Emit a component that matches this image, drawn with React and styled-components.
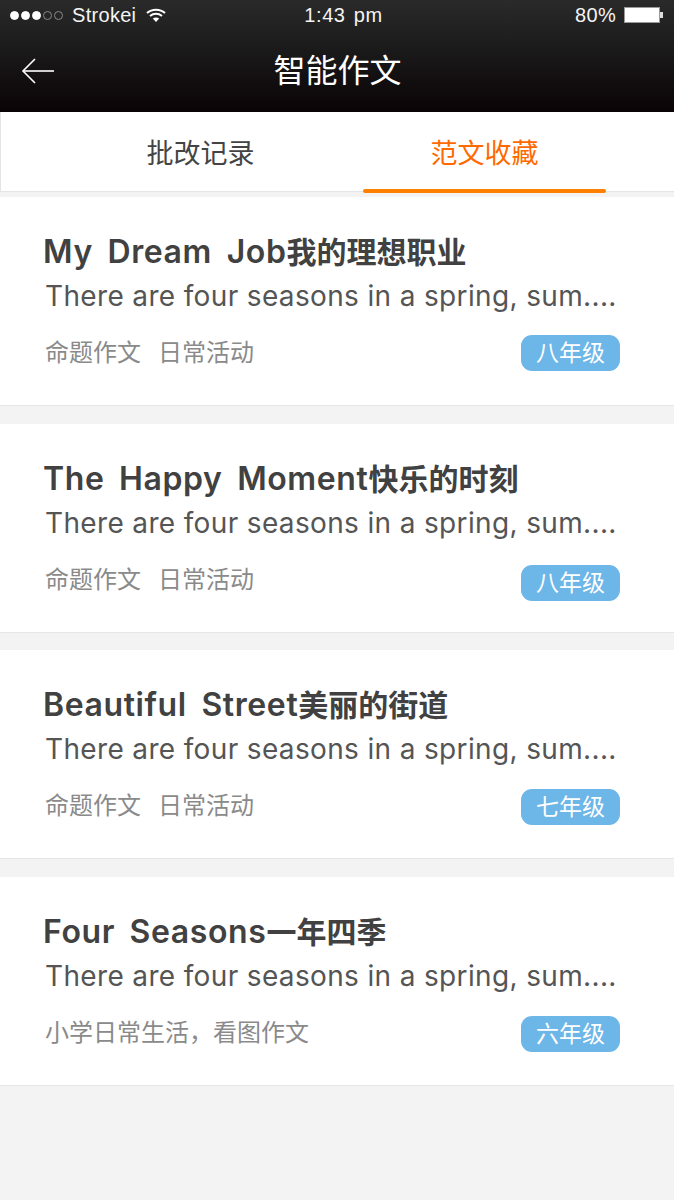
import React from 'react';
import styled, { createGlobalStyle } from 'styled-components';

const FONT = '"Liberation Sans", "Noto Sans CJK SC", sans-serif';
const LATIN = 'Inter, "Noto Sans CJK SC", sans-serif';

const GlobalStyle = createGlobalStyle`
  html, body {
    margin: 0;
    padding: 0;
    background: #f3f3f3;
    font-family: ${FONT};
  }
`;

const Page = styled.div`
  width: 674px;
  height: 1200px;
  overflow: hidden;
  background: #f3f3f3;
`;

const Header = styled.header`
  height: 112px;
  box-sizing: border-box;
  background: linear-gradient(#2a2a2a, #1c1c1c 40%, #0a0306);
  color: #fff;
`;

const StatusBar = styled.div`
  height: 30px;
  display: grid;
  grid-template-columns: 1fr auto 1fr;
  align-items: center;
  padding: 0 10px;
  font-size: 20px;
  color: #f4f4f4;
`;

const StatusLeft = styled.div`
  display: flex;
  align-items: center;
`;

const Signal = styled.span`
  width: 9px;
  height: 9px;
  margin-right: 2px;
  box-sizing: border-box;
  border-radius: 50%;
  border: 1px solid ${(p) => (p.$on ? '#fff' : '#888')};
  background: ${(p) => (p.$on ? '#fff' : 'transparent')};
`;

const Carrier = styled.span`
  margin: 0 10px 0 7px;
  letter-spacing: 0.3px;
`;

const Clock = styled.div`
  margin-left: 13px;
  letter-spacing: 0.6px;
  word-spacing: 2px;
`;

const StatusRight = styled.div`
  display: flex;
  align-items: center;
  justify-content: flex-end;
  gap: 8px;
  letter-spacing: 0.3px;
`;

const NavBar = styled.div`
  height: 82px;
  box-sizing: border-box;
  display: grid;
  grid-template-columns: 1fr auto 1fr;
  align-items: center;
  padding: 0 21px;
`;

const Title = styled.div`
  font-size: 32px;
  line-height: 40px;
  margin-left: 1px;
`;

const Tabs = styled.div`
  height: 80px;
  box-sizing: border-box;
  display: grid;
  grid-template-columns: 243px 243px;
  column-gap: 41px;
  padding-left: 78px;
  background: #fff;
  border-left: 1px solid #e4e4e4;
  border-bottom: 1px solid #e6e6e6;
`;

const Tab = styled.div`
  position: relative;
  display: flex;
  align-items: center;
  justify-content: center;
  padding-bottom: 1px;
  font-size: 27px;
  color: ${(p) => (p.$active ? '#ff6a00' : '#444')};
`;

const TabLine = styled.span`
  position: absolute;
  left: 0;
  right: 0;
  bottom: -2px;
  height: 4px;
  border-radius: 2px;
  background: #ff8000;
`;

const List = styled.div`
  margin-top: 5px;
  display: flex;
  flex-direction: column;
  gap: 17.67px;
`;

const Card = styled.article`
  height: 209px;
  box-sizing: border-box;
  padding: 35px 54px 0 43px;
  background: #fff;
  border-bottom: 1px solid #e6e6e6;
`;

const CardTitle = styled.h2`
  margin: 0;
  font-family: ${LATIN};
  font-size: 30px;
  line-height: 40px;
  font-weight: 600;
  color: #414141;
  white-space: nowrap;
`;

const TitleEn = styled.span`
  font-size: 32px;
  font-weight: 600;
  letter-spacing: 0.6px;
  word-spacing: 6px;
`;

const Excerpt = styled.p`
  margin: 5px 0 0 2px;
  font-family: ${LATIN};
  font-size: 28px;
  font-weight: 400;
  line-height: 38px;
  letter-spacing: 0.35px;
  color: #555;
  white-space: nowrap;
`;

const Footer = styled.div`
  height: 36px;
  margin-top: 20px;
  display: flex;
  align-items: center;
  justify-content: space-between;
`;

const Tags = styled.div`
  display: flex;
  gap: 17px;
  margin-left: 2px;
  font-size: 24px;
  line-height: 36px;
  color: #8a8a8a;
`;

const Grade = styled.span`
  width: 99px;
  height: 36px;
  margin-top: ${(p) => p.$drop}px;
  border-radius: 11px;
  background: #6cb6e8;
  color: #fff;
  font-size: 23px;
  line-height: 37px;
  text-align: center;
`;

const essays = [
  { en: 'My Dream Job', zh: '我的理想职业', tags: ['命题作文', '日常活动'], grade: '八年级', drop: 0 },
  { en: 'The Happy Moment', zh: '快乐的时刻', tags: ['命题作文', '日常活动'], grade: '八年级', drop: 6 },
  { en: 'Beautiful Street', zh: '美丽的街道', tags: ['命题作文', '日常活动'], grade: '七年级', drop: 2 },
  { en: 'Four Seasons', zh: '一年四季', tags: ['小学日常生活，看图作文'], grade: '六年级', drop: 2 },
];

function Wifi() {
  return (
    <svg width="20" height="15" viewBox="0 0 20 15" fill="none" stroke="#fff" strokeWidth="2">
      <path d="M1 5 C6 0.5 14 0.5 19 5" />
      <path d="M4 8 C7.5 5 12.5 5 16 8" />
      <path d="M10 14 L6.8 10.6 C8.6 9.2 11.4 9.2 13.2 10.6 Z" fill="#fff" stroke="none" />
    </svg>
  );
}

function Battery() {
  return (
    <svg width="40" height="16" viewBox="0 0 40 16">
      <rect x="0.5" y="0.5" width="35" height="15" fill="#fff" stroke="#999" />
      <rect x="36" y="5" width="3" height="6" fill="#ddd" />
    </svg>
  );
}

function BackArrow() {
  return (
    <svg width="34" height="28" viewBox="0 0 34 28" fill="none" stroke="#fff" strokeWidth="1.6">
      <path d="M33 14 H2" />
      <path d="M14 2 L2 14 L14 26" />
    </svg>
  );
}

export default function App() {
  return (
    <Page>
      <GlobalStyle />
      <Header>
        <StatusBar>
          <StatusLeft>
            <Signal $on />
            <Signal $on />
            <Signal $on />
            <Signal />
            <Signal />
            <Carrier>Strokei</Carrier>
            <Wifi />
          </StatusLeft>
          <Clock>1:43 pm</Clock>
          <StatusRight>
            80%
            <Battery />
          </StatusRight>
        </StatusBar>
        <NavBar>
          <BackArrow />
          <Title>智能作文</Title>
        </NavBar>
      </Header>
      <Tabs>
        <Tab>批改记录</Tab>
        <Tab $active>
          范文收藏
          <TabLine />
        </Tab>
      </Tabs>
      <List>
        {essays.map((essay) => (
          <Card key={essay.en}>
            <CardTitle>
              <TitleEn>{essay.en}</TitleEn>
              {essay.zh}
            </CardTitle>
            <Excerpt>There are four seasons in a spring, sum....</Excerpt>
            <Footer>
              <Tags>
                {essay.tags.map((tag) => (
                  <span key={tag}>{tag}</span>
                ))}
              </Tags>
              <Grade $drop={essay.drop}>{essay.grade}</Grade>
            </Footer>
          </Card>
        ))}
      </List>
    </Page>
  );
}
